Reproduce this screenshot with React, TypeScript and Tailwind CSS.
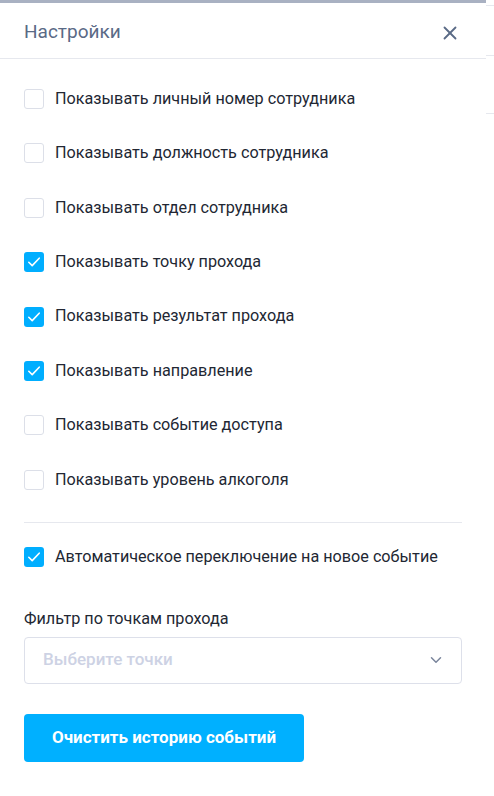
import { X, ChevronDown } from "lucide-react";

const options = [
  { label: "Показывать личный номер сотрудника", checked: false },
  { label: "Показывать должность сотрудника", checked: false },
  { label: "Показывать отдел сотрудника", checked: false },
  { label: "Показывать точку прохода", checked: true },
  { label: "Показывать результат прохода", checked: true },
  { label: "Показывать направление", checked: true },
  { label: "Показывать событие доступа", checked: false },
  { label: "Показывать уровень алкоголя", checked: false },
];

function Checkbox({ checked }: { checked: boolean }) {
  if (checked) {
    return (
      <span className="flex h-5 w-5 shrink-0 items-center justify-center rounded-[3px] bg-[#00aeff]">
        <svg width="16" height="16" viewBox="0 0 16 16" fill="none">
          <path d="M2.8 8.3 6.2 11.6 13.2 4.2" stroke="white" strokeWidth="1.6" strokeLinecap="round" strokeLinejoin="round" />
        </svg>
      </span>
    );
  }
  return <span className="h-5 w-5 shrink-0 rounded-[3px] border border-[#dcdfe8] bg-white" />;
}

function Row({ label, checked }: { label: string; checked: boolean }) {
  return (
    <label className="flex h-5 items-center gap-[11px] text-[16.2px] text-[#222733]">
      <Checkbox checked={checked} />
      <span>{label}</span>
    </label>
  );
}

export default function App() {
  return (
    <div className="flex h-[796px] w-full bg-white font-['Roboto',sans-serif]">
      <div className="flex w-[486px] flex-col">
        <div className="h-[3px] bg-[#a9b1c2]" />
        <div className="flex h-[56px] items-center justify-between border-b border-[#e6e8ee] px-6 pt-[4px]">
          <h2 className="text-[19px] text-[#5a6a86]">Настройки</h2>
          <X className="mr-[1px] text-[#5a6a86]" size={22} strokeWidth={2} />
        </div>

        <div className="flex flex-col px-6 pt-[30px]">
          <div className="flex flex-col gap-[34.4px]">
            {options.map((o) => (
              <Row key={o.label} label={o.label} checked={o.checked} />
            ))}
          </div>

          <div className="mt-[32px] border-t border-[#e6e8ee]" />

          <div className="mt-[24px]">
            <Row label="Автоматическое переключение на новое событие" checked />
          </div>

          <p className="mt-[42px] text-[16.2px] leading-5 text-[#222733]">Фильтр по точкам прохода</p>

          <div className="mt-[8px] flex h-[47px] items-center justify-between rounded-[4px] border border-[#dde0ea] pl-[18px] pr-[16px]">
            <span className="text-[17px] font-medium text-[#cdd2e4]">Выберите точки</span>
            <ChevronDown className="text-[#7a859c]" size={18} strokeWidth={2} />
          </div>

          <button className="mt-[30px] h-[48px] w-[280px] rounded-[4px] bg-[#00b0ff] text-[17px] font-bold text-white">
            Очистить историю событий
          </button>
        </div>
      </div>
      <div className="flex flex-1 flex-col">
        <div className="mt-[5px] border-t border-[#e6e8ee]" />
        <div className="mt-[49px] border-t border-[#e6e8ee]" />
        <div className="mt-[57px] border-t border-[#e6e8ee]" />
      </div>
    </div>
  );
}
